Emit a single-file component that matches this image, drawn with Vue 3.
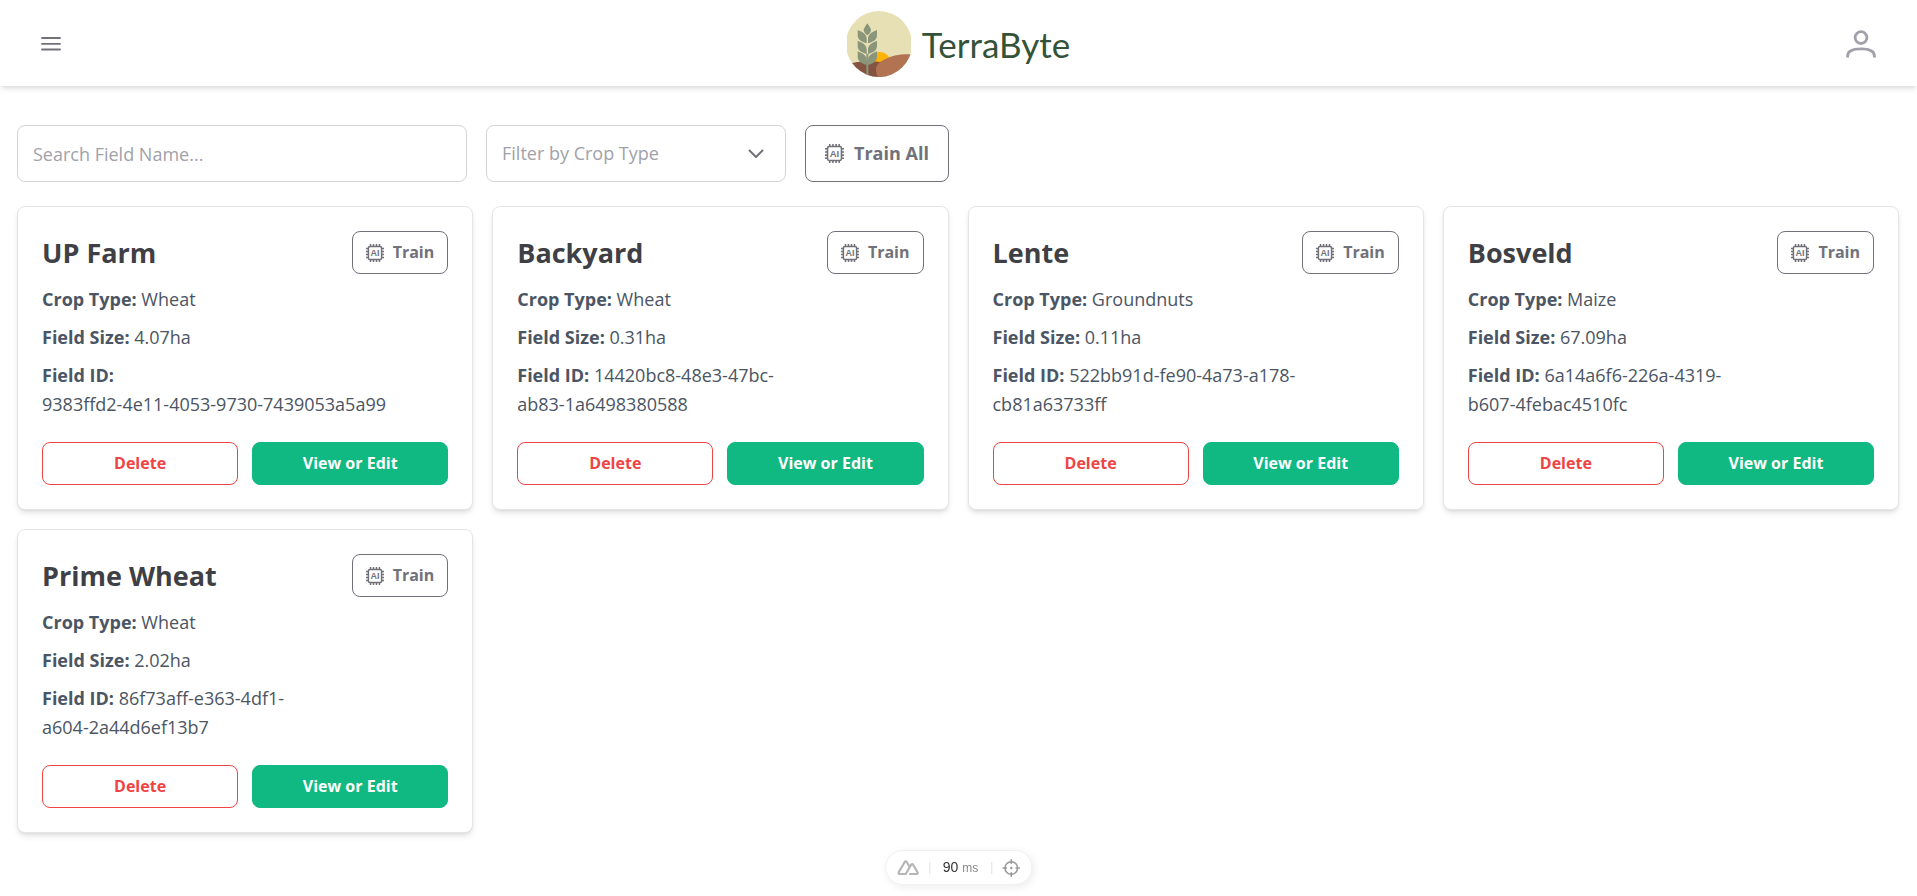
<script setup>
import { computed, ref } from 'vue'

const search = ref('')
const cropType = ref('')

const fields = [
  { name: 'UP Farm', crop: 'Wheat', size: '4.07ha', id: '9383ffd2-4e11-4053-9730-7439053a5a99' },
  { name: 'Backyard', crop: 'Wheat', size: '0.31ha', id: '14420bc8-48e3-47bc-ab83-1a6498380588' },
  { name: 'Lente', crop: 'Groundnuts', size: '0.11ha', id: '522bb91d-fe90-4a73-a178-cb81a63733ff' },
  { name: 'Bosveld', crop: 'Maize', size: '67.09ha', id: '6a14a6f6-226a-4319-b607-4febac4510fc' },
  { name: 'Prime Wheat', crop: 'Wheat', size: '2.02ha', id: '86f73aff-e363-4df1-a604-2a44d6ef13b7' },
]

const cropTypes = [...new Set(fields.map((f) => f.crop))]

// An id may wrap after a hyphen only where a letter follows.
const idParts = (id) => id.split(/(?<=-)(?=[a-z])/)

// Four pins on each side of the chip icon.
const chipPins = [4.5, 7.5, 10.5, 13.5]
  .map((p) => `M${p} 0v2.500M${p} 15.500V18M0 ${p}h2.500M15.500 ${p}H18`)
  .join('')

const visibleFields = computed(() =>
  fields.filter(
    (f) =>
      f.name.toLowerCase().includes(search.value.toLowerCase()) &&
      (!cropType.value || f.crop === cropType.value),
  ),
)
</script>

<template>
  <div class="page">
    <header class="topbar">
      <button class="icon-btn" type="button" aria-label="Open menu">
        <svg width="20" height="14" viewBox="0 0 20 14">
          <path d="M1 1h18M1 6.8h18M1 12.5h18" stroke="#71717a" stroke-width="1.8" stroke-linecap="round" />
        </svg>
      </button>

      <a class="brand" href="#">
        <svg width="64" height="66" viewBox="54 32 192 198" aria-hidden="true">
          <clipPath id="disc"><circle cx="150" cy="131" r="99" /></clipPath>
          <g clip-path="url(#disc)">
            <rect x="50" y="30" width="200" height="202" fill="#e8e0b5" />
            <circle cx="152" cy="188" r="33" fill="#fdb305" />
            <path d="M50 192Q100 178 160 186V232H50z" fill="#845441" />
            <path d="M146 228C136 205 140 190 165 178C190 165 215 160 250 162V232H146z" fill="#b27353" />
            <path d="M115 160V228" stroke="#8a957a" stroke-width="6" />
            <g fill="#8a957a">
              <path d="M115 69C122 80 126 84 126 90C125 97 120 101 115 105C110 101 105 97 104 90C104 84 108 80 115 69z" />
              <path d="M86 89C100 94 113 102 113 115V129C98 125 86 119 86 105z" />
              <path d="M144 89C130 94 117 102 117 115V129C132 125 144 119 144 105z" />
              <path d="M86 121C100 126 113 134 113 147V161C98 157 86 151 86 137z" />
              <path d="M144 121C130 126 117 134 117 147V161C132 157 144 151 144 137z" />
              <path d="M86 153C100 158 113 166 113 179V194C98 189 86 183 86 169z" />
              <path d="M144 153C130 158 117 166 117 179V194C132 189 144 183 144 169z" />
            </g>
          </g>
        </svg>
        <span>TerraByte</span>
      </a>

      <button class="icon-btn" type="button" aria-label="Account">
        <svg width="30" height="28" viewBox="0 0 30 28" fill="none" stroke="#a1a1aa" stroke-width="2.8">
          <circle cx="15" cy="7.6" r="5.9" />
          <path d="M1.6 27.6V26C1.6 20 8 18.8 15 18.8S28.4 20 28.4 26v1.6" />
        </svg>
      </button>
    </header>

    <main class="content">
      <form class="filters" @submit.prevent>
        <input v-model="search" class="control search" type="text" placeholder="Search Field Name..." aria-label="Search Field Name" />
        <div class="select-wrap">
          <select v-model="cropType" class="control" :class="{ empty: !cropType }" aria-label="Filter by Crop Type">
            <option value="">Filter by Crop Type</option>
            <option v-for="crop in cropTypes" :key="crop" :value="crop">{{ crop }}</option>
          </select>
          <svg class="chevron" width="16" height="10" viewBox="0 0 16 10" aria-hidden="true">
            <path d="M1.5 1.5 8 8l6.5-6.5" fill="none" stroke="#71717a" stroke-width="2" stroke-linecap="round" stroke-linejoin="round" />
          </svg>
        </div>
        <button class="btn train-all" type="button">
          <svg class="chip" width="19" height="19" viewBox="0 0 18 18" aria-hidden="true">
            <rect x="2.4" y="2.4" width="13.2" height="13.2" rx="1.6" />
            <path :d="chipPins" />
            <text x="9" y="12.2">AI</text>
          </svg>
          Train All
        </button>
      </form>

      <section class="grid" aria-label="Fields">
        <article v-for="field in visibleFields" :key="field.id" class="card">
          <div class="card-head">
            <h2>{{ field.name }}</h2>
            <button class="btn train" type="button">
              <svg class="chip" width="18" height="18" viewBox="0 0 18 18" aria-hidden="true">
                <rect x="2.4" y="2.4" width="13.2" height="13.2" rx="1.6" />
                <path :d="chipPins" />
                <text x="9" y="12.2">AI</text>
              </svg>
              Train
            </button>
          </div>
          <div class="meta">
            <p><strong>Crop Type:</strong> {{ field.crop }}</p>
            <p><strong>Field Size:</strong> {{ field.size }}</p>
            <p>
              <strong>Field ID:</strong>{{ ' ' }}<template v-for="part in idParts(field.id)" :key="part"><span class="id-part">{{ part }}</span><wbr /></template>
            </p>
          </div>
          <div class="actions">
            <button class="btn delete" type="button">Delete</button>
            <button class="btn edit" type="button">View or Edit</button>
          </div>
        </article>
      </section>
    </main>

    <aside class="devtools" aria-label="Developer tools">
      <button class="tool" type="button" aria-label="Toggle devtools">
        <svg width="22" height="16" viewBox="0 0 22 16" fill="none" stroke="#b5b5b5" stroke-width="2.2" stroke-linejoin="round">
          <path d="M12 14h7.5a1 1 0 0 0 .9-1.5L15.7 4.5a1 1 0 0 0-1.7 0L8.500 14H2.200a1 1 0 0 1-.9-1.5L7.6 1.7a1 1 0 0 1 1.7 0l2.9 5" />
        </svg>
      </button>
      <span class="divider"></span>
      <span class="timing">90 <small>ms</small></span>
      <span class="divider"></span>
      <button class="tool" type="button" aria-label="Inspect component">
        <svg width="18" height="18" viewBox="0 0 18 18" fill="none" stroke="#999" stroke-width="1.6" stroke-linecap="round">
          <circle cx="9" cy="9" r="6.3" />
          <path d="M9 .8v3.4M9 13.8v3.4M.8 9h3.4M13.8 9h3.4" />
          <circle cx="9" cy="9" r="1.2" fill="#999" stroke="none" />
        </svg>
      </button>
    </aside>
  </div>
</template>

<style>
body {
  background: #fff;
}
</style>

<style scoped>
.page,
.page * {
  box-sizing: border-box;
}
.page {
  font-family: "Open Sans", "Noto Sans", sans-serif;
  font-size: 18px;
  line-height: 29px;
  color: #4b5563;
}
button,
input,
select {
  font: inherit;
  margin: 0;
}
button {
  cursor: pointer;
}
.topbar {
  display: flex;
  align-items: center;
  justify-content: space-between;
  height: 86px;
  padding: 1px 41px 0;
  background: #fff;
  box-shadow: 0 4px 6px -1px rgb(0 0 0 / 0.1), 0 2px 4px -2px rgb(0 0 0 / 0.1);
}
.icon-btn {
  display: flex;
  width: 30px;
  padding: 0;
  border: 0;
  background: none;
}
.brand {
  display: flex;
  align-items: center;
  gap: 11px;
  color: #345238;
  font-family: Lato, sans-serif;
  font-size: 35px;
  line-height: 40px;
  text-decoration: none;
}
.content {
  padding: 39px 18px 20px 17px;
}
.filters {
  display: flex;
  gap: 19px;
  margin-bottom: 24px;
}
.control {
  width: 100%;
  height: 57px;
  padding: 0 15px;
  border: 1px solid #d4d4d8;
  border-radius: 8px;
  background: #fff;
  color: #3f3f46;
  outline: none;
}
.control::placeholder {
  color: #a1a1aa;
  opacity: 1;
}
.search {
  width: 450px;
}
.select-wrap {
  position: relative;
  width: 300px;
}
.select-wrap select {
  appearance: none;
}
.select-wrap .empty {
  color: #a1a1aa;
}
.chevron {
  position: absolute;
  top: 24px;
  right: 22px;
  pointer-events: none;
}
.btn {
  display: flex;
  align-items: center;
  justify-content: center;
  height: 43px;
  padding: 0 13px;
  border: 1px solid #71717a;
  border-radius: 8px;
  background: #fff;
  color: #71717a;
  font-size: 16px;
  font-weight: 700;
  white-space: nowrap;
}
.chip {
  fill: none;
  stroke: currentColor;
  stroke-width: 1.5;
}
.chip text {
  fill: currentColor;
  stroke: none;
  font-family: "Liberation Sans", sans-serif;
  font-size: 9px;
  font-weight: 700;
  text-anchor: middle;
}
.train {
  flex: none;
  gap: 9px;
}
.train-all {
  height: 57px;
  gap: 10px;
  padding: 0 19px;
  font-size: 18px;
}
.grid {
  display: grid;
  grid-template-columns: repeat(4, 1fr);
  gap: 19px;
}
.card {
  min-width: 0;
  padding: 24px;
  border: 1px solid #e5e5e8;
  border-radius: 8px;
  background: #fff;
  box-shadow: 0 4px 6px -1px rgb(0 0 0 / 0.1), 0 2px 4px -2px rgb(0 0 0 / 0.1);
}
.card-head {
  display: flex;
  align-items: center;
  justify-content: space-between;
  margin-bottom: 11px;
}
h2 {
  margin: 0;
  color: #3f3f46;
  font-size: 27px;
  font-weight: 700;
  line-height: 40px;
}
.meta {
  display: flex;
  flex-direction: column;
  gap: 9px;
  margin-bottom: 23px;
}
.meta p {
  margin: 0;
}
.id-part {
  white-space: nowrap;
}
.actions {
  display: grid;
  grid-template-columns: 1fr 1fr;
  gap: 14px;
}
.delete {
  border-color: #ef4444;
  color: #ef4444;
}
.edit {
  border-color: #10b981;
  background: #10b981;
  color: #fff;
}
.devtools {
  position: fixed;
  bottom: 11px;
  left: 50%;
  display: flex;
  align-items: center;
  gap: 10px;
  height: 35px;
  padding: 0 11px;
  border: 1px solid #f0f0f0;
  border-radius: 18px;
  background: #fff;
  box-shadow: 2px 2px 8px rgb(0 0 0 / 0.08);
  transform: translateX(-50%);
}
.tool {
  display: flex;
  padding: 0;
  border: 0;
  background: none;
}
.divider {
  width: 1px;
  height: 12px;
  background: #e2e2e2;
}
.timing {
  padding: 0 3px;
  color: #333;
  font-family: "Liberation Sans", sans-serif;
  font-size: 14px;
  line-height: 20px;
}
.timing small {
  color: #888;
  font-size: 12px;
}
</style>
